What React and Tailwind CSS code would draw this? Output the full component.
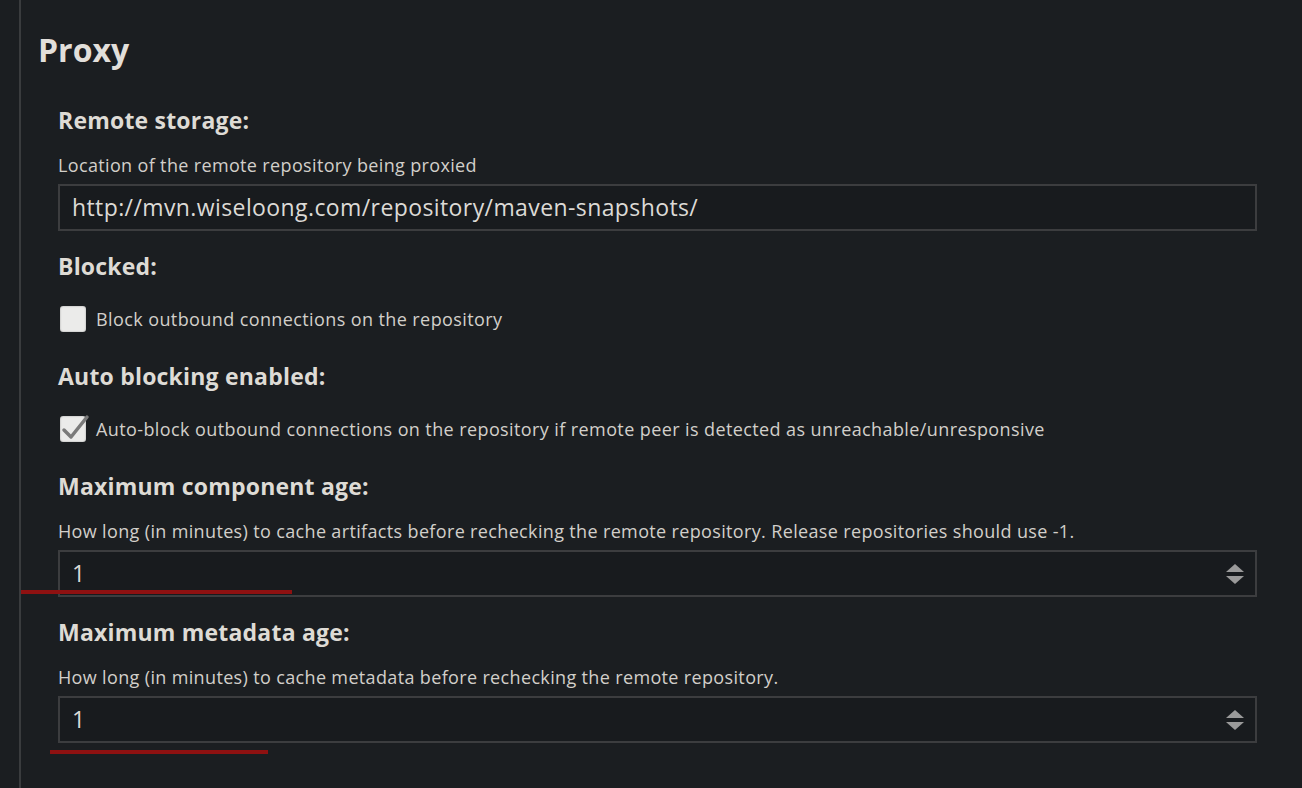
import React from "react";

const Label = ({ children, className = "" }) => (
  <div className={`h-[28px] text-[23px] leading-[28px] font-bold tracking-[0.2px] text-[#dedbd5] ${className}`}>
    {children}
  </div>
);

const Description = ({ children }) => (
  <div className="mt-[19px] h-[24px] text-[18px] leading-[24px] tracking-[0.35px] text-[#d2cfca]">{children}</div>
);

const TextInput = ({ value, spinner = false }) => (
  <div className="mt-[7px] flex h-[47px] items-center border-2 border-[#3c3d3f] bg-[#181b1e] pl-[12px] pr-[12px]">
    <span className="flex-1 text-[23px] tracking-[0.4px] text-[#dcdad6]">{value}</span>
    {spinner && (
      <svg width="20" height="28" viewBox="0 0 20 28" className="mr-[-2px]">
        <path d="M10 4 L19 12 L1 12 Z" fill="#9a9a9a" />
        <path d="M1 16 L19 16 L10 24 Z" fill="#9a9a9a" />
      </svg>
    )}
  </div>
);

const Checkbox = ({ checked, label }) => (
  <div className="mt-[25px] flex h-[28px] items-center">
    <div className="relative ml-[2px] h-[26px] w-[26px] rounded-[3px] bg-[#ebebea] shadow-[inset_0_0_2px_rgba(0,0,0,0.35)]">
      {checked && (
        <svg width="30" height="30" viewBox="0 0 30 30" className="absolute left-[0px] top-[-4px]">
          <path d="M4 18 L11 25 L27 5" fill="none" stroke="#7a7a7a" strokeWidth="3.5" strokeLinecap="round" strokeLinejoin="round" />
        </svg>
      )}
    </div>
    <span className="ml-[10px] text-[18px] tracking-[0.4px] text-[#d2cfca]">{label}</span>
  </div>
);

export default function App() {
  return (
    <div
      className="relative min-h-screen bg-[#1b1e21]"
      style={{ fontFamily: "'Open Sans', Lato, sans-serif" }}
    >
      <div className="ml-[19px] min-h-screen border-l-2 border-[#3a3c3e] pb-[44px] pl-[17px] pt-[30px]">
        <h1 className="h-[40px] text-[32px] font-bold leading-[40px] text-[#e2dfda]">Proxy</h1>

        <div className="mr-[45px] pl-[20px]">
          <Label className="mt-[36px]">Remote storage:</Label>
          <Description>Location of the remote repository being proxied</Description>
          <TextInput value="http://mvn.wiseloong.com/repository/maven-snapshots/" />

          <Label className="mt-[21px]">Blocked:</Label>
          <Checkbox checked={false} label="Block outbound connections on the repository" />

          <Label className="mt-[29px]">Auto blocking enabled:</Label>
          <Checkbox
            checked
            label="Auto-block outbound connections on the repository if remote peer is detected as unreachable/unresponsive"
          />

          <Label className="mt-[29px]">Maximum component age:</Label>
          <Description>
            How long (in minutes) to cache artifacts before rechecking the remote repository. Release repositories should use -1.
          </Description>
          <TextInput value="1" spinner />

          <Label className="mt-[21px]">Maximum metadata age:</Label>
          <Description>How long (in minutes) to cache metadata before rechecking the remote repository.</Description>
          <TextInput value="1" spinner />
        </div>
      </div>

      {/* red annotation underlines */}
      <div className="absolute left-[21px] top-[590px] h-[4px] w-[271px] bg-[#8e1111]" />
      <div className="absolute left-[50px] top-[750px] h-[4px] w-[218px] bg-[#8e1111]" />
    </div>
  );
}
